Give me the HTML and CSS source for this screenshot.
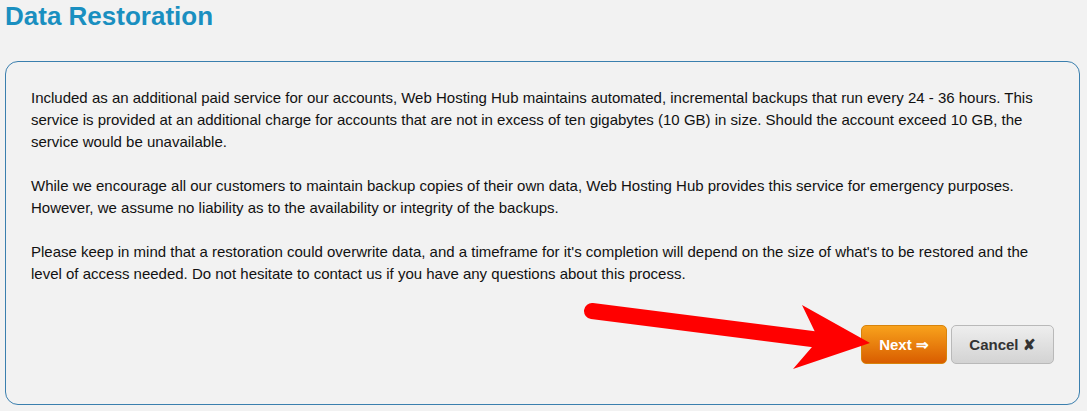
FILE: index.html
```html
<!DOCTYPE html>
<html>
<head>
<meta charset="utf-8">
<link rel="stylesheet" href="styles.css">
</head>
<body>
<h1 class="title">Data Restoration</h1>
<div class="panel">
  <p>Included as an additional paid service for our accounts, Web Hosting Hub maintains automated, incremental backups that run every 24 - 36 hours. This service is provided at an additional charge for accounts that are not in excess of ten gigabytes (10 GB) in size. Should the account exceed 10 GB, the service would be unavailable.</p>
  <p>While we encourage all our customers to maintain backup copies of their own data, Web Hosting Hub provides this service for emergency purposes. However, we assume no liability as to the availability or integrity of the backups.</p>
  <p>Please keep in mind that a restoration could overwrite data, and a timeframe for it's completion will depend on the size of what's to be restored and the level of access needed. Do not hesitate to contact us if you have any questions about this process.</p>
  <div class="actions">
    <button class="btn btn-next">Next &#8658;</button>
    <button class="btn btn-cancel">Cancel &#10008;</button>
  </div>
</div>
<svg class="arrow" width="1087" height="411" viewBox="0 0 1087 411">
  <line x1="592" y1="311" x2="820" y2="340" stroke="#ff0000" stroke-width="16" stroke-linecap="round"/>
  <polygon points="802,305 870,343 793,369 812,347 815,332" fill="#ff0000"/>
</svg>
</body>
</html>
```

FILE: styles.css
```css
html, body {
  margin: 0;
  padding: 0;
  background: #f2f2f2;
}
body {
  font-family: "Liberation Sans", Arial, sans-serif;
  position: relative;
  width: 1087px;
  height: 411px;
  overflow: hidden;
}
.title {
  margin: 0;
  padding: 1px 0 0 5px;
  font-size: 26px;
  line-height: 30px;
  font-weight: bold;
  color: #1a8fc0;
}
.panel {
  margin: 30px 7px 0 5px;
  border: 1px solid #3a7fae;
  border-radius: 13px;
  padding: 15px 25px 40px 25px;
  height: 287px;
}
.panel p {
  margin: 10px 0 22px 0;
  font-size: 15px;
  line-height: 22px;
  color: #111;
}
.actions {
  display: flex;
  justify-content: flex-end;
  gap: 4px;
  margin-top: 40px;
}
.btn {
  font-family: "Liberation Sans", Arial, sans-serif;
  font-weight: bold;
  font-size: 15px;
  height: 39px;
  border-radius: 5px;
  padding: 0;
  cursor: pointer;
}
.btn-next {
  width: 86px;
  color: #fff;
  border: 1px solid #d8840c;
  background: linear-gradient(#f8a21c, #d95d00);
}
.btn-cancel {
  width: 103px;
  color: #333;
  border: 1px solid #b9b9b9;
  background: linear-gradient(#eeeeee, #d3d3d3);
}
.arrow {
  position: absolute;
  left: 0;
  top: 0;
  pointer-events: none;
}
```
